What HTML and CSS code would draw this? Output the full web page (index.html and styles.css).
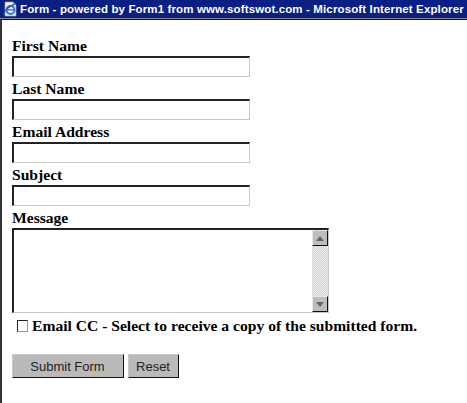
FILE: index.html
```html
<!DOCTYPE html>
<html lang="en">
<head>
<meta charset="utf-8">
<title>Form</title>
<link rel="stylesheet" href="styles.css">
</head>
<body>
<div class="window">
  <header class="titlebar">
    <svg class="ie-icon" width="16" height="16" viewBox="0 0 16 16" aria-hidden="true">
      <path d="M3 1h8l3 3v11H3z" fill="#f2f2f2" stroke="#a0a0a0" stroke-width=".7"/>
      <path d="M11 1v3h3" fill="#c8c8c8" stroke="#8a8a8a" stroke-width=".6"/>
      <ellipse cx="8.5" cy="9" rx="4" ry="4" fill="none" stroke="#2f78d8" stroke-width="2"/>
      <path d="M5 8.8h7" stroke="#2f78d8" stroke-width="1.4"/>
      <path d="M1 13.5C3 9 8 5 13 3" fill="none" stroke="#1c4fa8" stroke-width="1.2"/>
    </svg>
    <span class="title-text">Form - powered by Form1 from www.softswot.com - Microsoft Internet Explorer</span>
  </header>
  <main class="page">
    <form class="form">
      <label class="label" for="f1">First Name</label>
      <input class="field" id="f1" type="text">
      <label class="label" for="f2">Last Name</label>
      <input class="field" id="f2" type="text">
      <label class="label" for="f3">Email Address</label>
      <input class="field" id="f3" type="text">
      <label class="label" for="f4">Subject</label>
      <input class="field" id="f4" type="text">
      <label class="label" for="f5">Message</label>
      <div class="textarea-box">
        <textarea class="textarea" id="f5"></textarea>
        <div class="scrollbar">
          <span class="scroll-btn"><svg width="8" height="5" viewBox="0 0 8 5"><path d="M4 0l4 5H0z" fill="#666"/></svg></span>
          <span class="scroll-track"></span>
          <span class="scroll-btn"><svg width="8" height="5" viewBox="0 0 8 5"><path d="M0 0h8L4 5z" fill="#666"/></svg></span>
        </div>
      </div>
      <div class="cc-row">
        <span class="checkbox"></span>
        <label class="cc-label">Email CC - Select to receive a copy of the submitted form.</label>
      </div>
      <div class="actions">
        <button class="btn btn-submit" type="button">Submit Form</button>
        <button class="btn btn-reset" type="button">Reset</button>
      </div>
    </form>
  </main>
</div>
</body>
</html>
```
FILE: styles.css
```css
* { box-sizing: border-box; }
html, body { margin: 0; padding: 0; background: #fff; }
body { width: 467px; height: 403px; overflow: hidden; }
.window { display: flex; flex-direction: column; height: 403px; }
.titlebar {
  display: flex;
  align-items: center;
  gap: 2px;
  height: 19px;
  padding-left: 2px;
  background: #0a1f84;
  border-bottom: 1px solid #8a8a9a;
  color: #fff;
  font: bold 11.5px "Liberation Sans", Arial, sans-serif;
  letter-spacing: 0.13px;
  white-space: nowrap;
  overflow: hidden;
}
.ie-icon { flex: none; }
.page {
  flex: 1;
  border-top: 1px solid #111;
  border-left: 2px solid #333;
  padding: 17px 0 0 10px;
}
.form { display: flex; flex-direction: column; align-items: flex-start; }
.label, .cc-label {
  font: bold 15.6px/18px "Liberation Serif", "Times New Roman", serif;
  color: #000;
}
.label { padding-bottom: 1px; }
.field {
  display: block;
  width: 238px;
  height: 21px;
  margin: 0 0 3px;
  padding: 0;
  background: #fff;
  border: 2px solid;
  border-color: #222 #c8c8c8 #c8c8c8 #222;
  border-right-width: 1px;
  border-bottom-width: 1px;
  border-radius: 0;
  outline: none;
}
.textarea-box {
  display: flex;
  width: 317px;
  height: 85px;
  background: #fff;
  border: 2px solid;
  border-color: #222 #c8c8c8 #c8c8c8 #222;
  border-right-width: 1px;
  border-bottom-width: 1px;
}
.textarea {
  flex: 1;
  min-width: 0;
  padding: 0;
  border: 0;
  outline: none;
  resize: none;
  background: #fff;
}
.scrollbar { display: flex; flex-direction: column; width: 16px; flex: none; }
.scroll-btn {
  display: flex;
  align-items: center;
  justify-content: center;
  height: 16px;
  flex: none;
  background: #bdbdbd;
  border: 1px solid;
  border-color: #e8e8e8 #111 #111 #e8e8e8;
}
.scroll-track {
  flex: 1;
  background-color: #dcdcdc;
  background-image: repeating-conic-gradient(#d0d0d0 0 25%, #f0f0f0 0 50%);
  background-size: 2px 2px;
}
.cc-row { display: flex; align-items: center; gap: 4px; height: 19px; margin: 3px 0 0 5px; }
.checkbox {
  width: 11px;
  height: 12px;
  flex: none;
  background: #fff;
  border: 1px solid;
  border-color: #222 #999 #999 #222;
}
.cc-label { white-space: nowrap; }
.actions { display: flex; gap: 4px; margin-top: 19px; }
.btn {
  height: 24px;
  padding: 0 1px 0 0;
  background: #bababa;
  border: 1px solid;
  border-color: #c8c8c8 #111 #111 #c8c8c8;
  border-radius: 0;
  color: #222;
  font: 13px "Liberation Sans", Arial, sans-serif;
}
.btn-submit { width: 112px; }
.btn-reset { width: 51px; }
```
